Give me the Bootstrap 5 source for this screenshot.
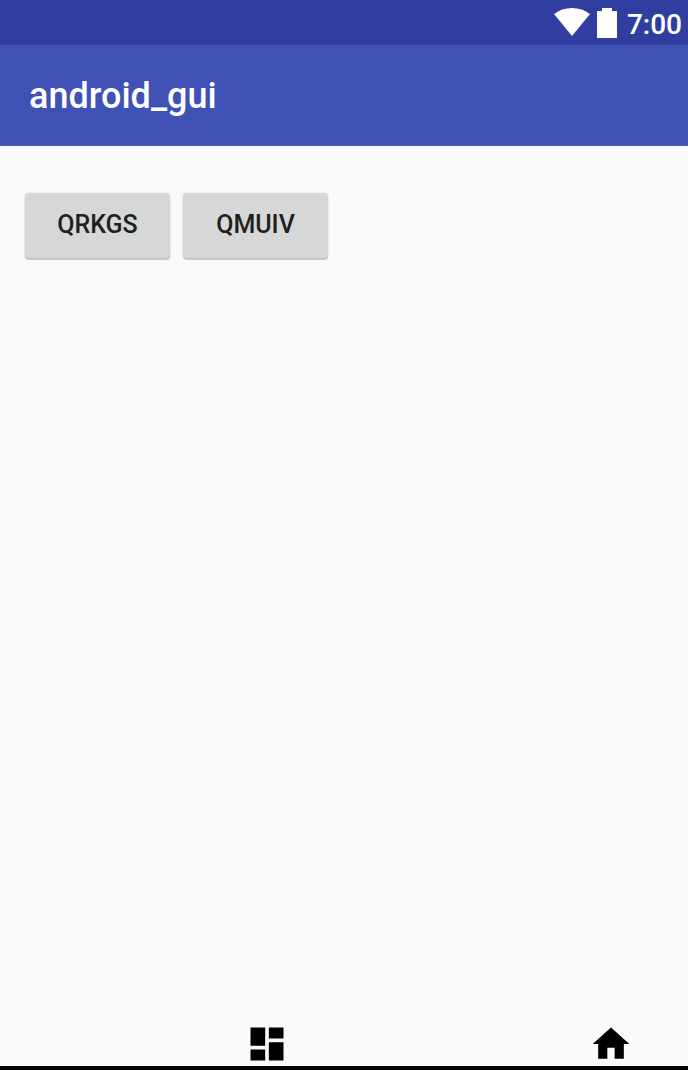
<!DOCTYPE html>
<html lang="en">
<head>
<meta charset="utf-8">
<meta name="viewport" content="width=device-width, initial-scale=1">
<title>android_gui</title>
<link href="https://cdn.jsdelivr.net/npm/bootstrap@5.3.0/dist/css/bootstrap.min.css" rel="stylesheet">
<style>
  body { font-family: Roboto, "Liberation Sans", sans-serif; background: #fafafa; }
  .status-bar { background: #303f9f; height: 45px; padding: 4px 6px 0 0; }
  .status-icons { gap: 7px; }
  .clock { font-size: 28px; line-height: 42px; font-weight: 500; margin-left: 10px; }
  .app-bar { background: #3f51b5; height: 101px; padding: 2px 29px 0; border-bottom: 1px solid #5162bd; }
  .app-title { font-size: 36px; line-height: 40px; font-weight: 500; }
  .content-area { padding: 47px 25px; gap: 13px; }
  .btn-raised {
    --bs-btn-color: #1f2020; --bs-btn-bg: #d6d8d7;
    --bs-btn-hover-color: #1f2020; --bs-btn-hover-bg: #cccecd;
    --bs-btn-active-bg: #c2c4c3;
    width: 145px; height: 65px; padding: 0 0 1px; border: 0; border-radius: 4px;
    font-size: 25px; line-height: 36px; font-weight: 500;
    box-shadow: 0 2px 1px rgba(0,0,0,.2), 0 0 2px rgba(0,0,0,.16);
  }
  .bottom-nav { border-bottom: 4px solid #000; }
  .nav-slot { padding-right: 55px; }
  .nav-slot a { color: #000; }
</style>
</head>
<body class="d-flex flex-column min-vh-100">
  <div class="status-bar d-flex align-items-start justify-content-end text-white">
    <div class="status-icons d-flex mt-1">
      <svg width="36" height="29" viewBox="0 0 36 29" fill="currentColor" role="img" aria-label="Wi-Fi"><path d="M0 6Q8 0 18 0t18 6L18 28z"/></svg>
      <svg width="20" height="30" viewBox="0 0 20 30" fill="currentColor" role="img" aria-label="Battery"><path d="M5 0h10v3h5v27H0V3h5z"/></svg>
    </div>
    <span class="clock">7:00</span>
  </div>
  <header class="app-bar d-flex align-items-center text-white">
    <h1 class="app-title m-0">android_gui</h1>
  </header>
  <main class="content-area flex-grow-1 d-flex align-items-start">
    <button type="button" class="btn btn-raised">QRKGS</button>
    <button type="button" class="btn btn-raised">QMUIV</button>
  </main>
  <nav class="bottom-nav">
    <div class="row g-0">
      <div class="nav-slot col-6 d-flex justify-content-end">
        <a class="d-flex" href="#dashboard" aria-label="Dashboard"><svg width="44" height="44" viewBox="0 0 24 24" fill="currentColor"><path d="M3 13h8V3H3v10zm0 8h8v-6H3v6zm10 0h8V11h-8v10zm0-18v6h8V3h-8z"/></svg></a>
      </div>
      <div class="nav-slot col-6 d-flex justify-content-end">
        <a class="d-flex" href="#home" aria-label="Home"><svg width="44" height="44" viewBox="0 0 24 24" fill="currentColor"><path d="M10 20v-6h4v6h5v-8h3L12 3 2 12h3v8z"/></svg></a>
      </div>
    </div>
  </nav>
<script src="https://cdn.jsdelivr.net/npm/bootstrap@5.3.0/dist/js/bootstrap.bundle.min.js"></script>
</body>
</html>
